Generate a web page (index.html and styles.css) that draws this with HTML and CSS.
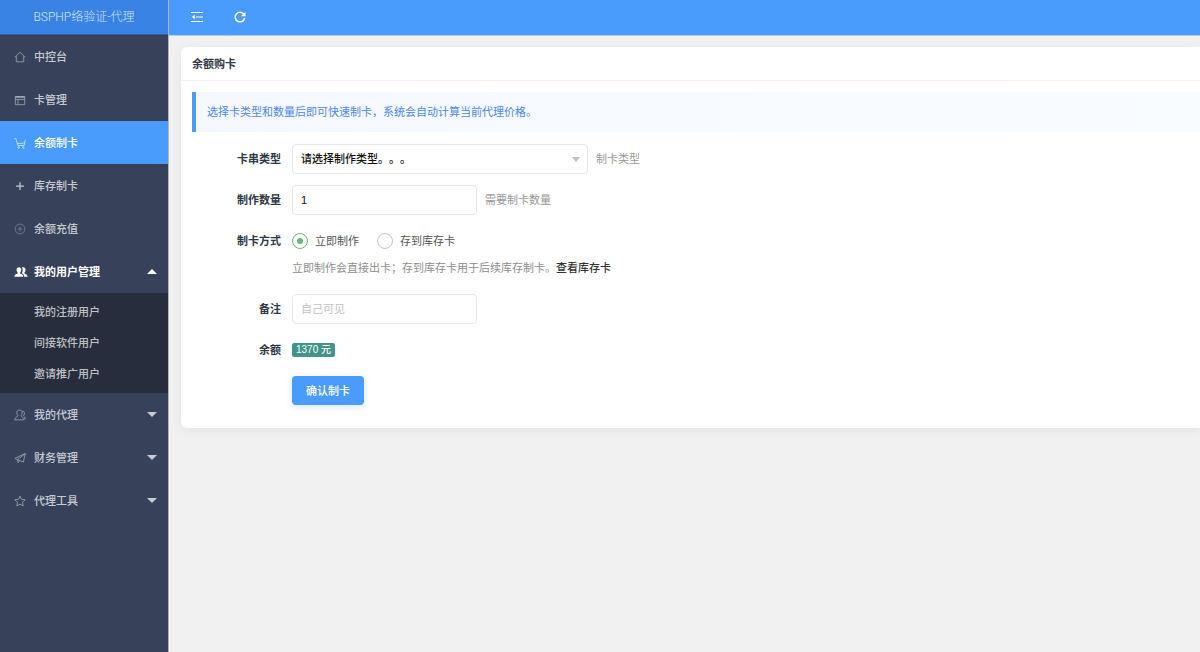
FILE: index.html
```html
<!DOCTYPE html>
<html lang="zh-CN">
<head>
<meta charset="utf-8">
<meta name="viewport" content="width=device-width, initial-scale=1">
<title>BSPHP络验证-代理</title>
<link rel="stylesheet" href="styles.css">
</head>
<body>
<div class="app">
  <aside class="sidebar">
    <h1 class="brand">BSPHP络验证-代理</h1>
    <nav class="nav">
      <a class="nav-item" href="#">
        <svg class="icon" viewBox="0 0 12 12"><path d="M.8 6.300 6 1.300l5.200 5M2.300 5.200v5.600h7.400V5.200"/></svg>
        <span>中控台</span>
      </a>
      <a class="nav-item" href="#">
        <svg class="icon" viewBox="0 0 12 12"><path d="M1.300 2.500h9.400v8.200H1.300zM1.300 5.500h9.400M4 5.500v5.200"/><path d="M1.300 3h9.400" stroke-width="1.600"/></svg>
        <span>卡管理</span>
      </a>
      <a class="nav-item nav-item-active" href="#">
        <svg class="icon" viewBox="0 0 12 12"><path d="M.3 1.500h1.600l2 7h6.300l1-5.800M3.400 6.700 10.700 6"/><circle cx="4.600" cy="10.500" r=".8"/><circle cx="9.300" cy="10.500" r=".8"/></svg>
        <span>余额制卡</span>
      </a>
      <a class="nav-item" href="#">
        <svg class="icon icon-strong" viewBox="0 0 12 12"><path d="M6 2.300v7.800M2.100 6.200h7.800"/></svg>
        <span>库存制卡</span>
      </a>
      <a class="nav-item" href="#">
        <svg class="icon icon-faint" viewBox="0 0 12 12"><circle cx="6" cy="6" r="4.900"/><path d="M6 3.700v4.600M3.700 6h4.600"/></svg>
        <span>余额充值</span>
      </a>
      <a class="nav-item nav-item-open" href="#">
        <svg class="icon icon-solid icon-wide" viewBox="0 0 14 12"><path d="M4.900 1.200c1.500 0 2.300 1.100 2.300 2.600 0 1.200-.5 2.300-1.100 2.900v.8c1.700.6 3 1.100 3.200 3.300H.3c.2-2.200 1.700-2.700 3.400-3.300v-.8C3.100 6.100 2.600 5 2.600 3.800c0-1.500.8-2.600 2.300-2.600z"/><path d="M8 1.500c.4-.2.7-.3 1.200-.3 1.500 0 2.300 1.100 2.300 2.600 0 1.200-.5 2.300-1.100 2.900v.8c1.700.6 3 1.100 3.200 3.300h-3.500c-.1-1.800-.8-2.800-2.300-3.500.6-1 .9-2 .9-3.300 0-1-.2-1.800-.7-2.500z"/></svg>
        <span>我的用户管理</span>
        <svg class="caret" viewBox="0 0 10 5"><path d="M0 5 5 0l5 5z"/></svg>
      </a>
      <div class="subnav">
        <a class="subnav-item" href="#">我的注册用户</a>
        <a class="subnav-item" href="#">间接软件用户</a>
        <a class="subnav-item" href="#">邀请推广用户</a>
      </div>
      <a class="nav-item" href="#">
        <svg class="icon" viewBox="0 0 12 12"><path d="M5.500 1c1.700 0 2.700 1.200 2.700 2.900 0 1.200-.5 2.200-1.200 2.800 0 1 2.300.8 2.400 4.200H.8c.2-3.400 3.300-3.200 3.300-4.200-.8-.6-1.300-1.600-1.300-2.800C2.800 2.200 3.800 1 5.500 1zM8.300 2c1.300.1 2.200 1 2.200 2.500 0 1-.4 1.700-1 2.200.1.800 1.700 1 1.900 3.300H10"/></svg>
        <span>我的代理</span>
        <svg class="caret" viewBox="0 0 10 5"><path d="M0 0h10L5 5z"/></svg>
      </a>
      <a class="nav-item" href="#">
        <svg class="icon" viewBox="0 0 12 12"><path d="M11.300 1.500.8 6.400l2.700 1.300 5.900 2.300zM11.300 1.500 3.500 7.700l.6 3 1.600-2.100"/></svg>
        <span>财务管理</span>
        <svg class="caret" viewBox="0 0 10 5"><path d="M0 0h10L5 5z"/></svg>
      </a>
      <a class="nav-item" href="#">
        <svg class="icon" viewBox="0 0 12 12"><path d="m6 1.100 1.500 3.200 3.700.5-2.700 2.500.7 3.600L6 9.200l-3.200 1.700.7-3.600L.8 4.800l3.700-.5z"/></svg>
        <span>代理工具</span>
        <svg class="caret" viewBox="0 0 10 5"><path d="M0 0h10L5 5z"/></svg>
      </a>
    </nav>
  </aside>

  <div class="content">
    <header class="topbar">
      <button class="tool" type="button" aria-label="收起菜单">
        <svg viewBox="0 0 12 12"><path d="M0 1.500h12M5 6h7M0 10.500h12"/><path class="fill" d="M3.800 3.800v4.400L.8 6z"/></svg>
      </button>
      <button class="tool" type="button" aria-label="刷新">
        <svg viewBox="0 0 12 12"><path d="M9.900 3.200A4.800 4.800 0 1 0 10.700 7" stroke-width="1.500"/><path class="fill" d="M11.500.8v4.500H7z"/></svg>
      </button>
    </header>

    <main class="main">
      <section class="card">
        <h2 class="card-title">余额购卡</h2>
        <div class="card-body">
          <p class="notice">选择卡类型和数量后即可快速制卡，系统会自动计算当前代理价格。</p>
          <form class="form">
            <div class="row">
              <label class="label" for="type">卡串类型</label>
              <div class="select-box">
                <select class="field" id="type"><option>请选择制作类型。。。</option></select>
              </div>
              <span class="hint">制卡类型</span>
            </div>
            <div class="row">
              <label class="label" for="count">制作数量</label>
              <input class="field field-short" id="count" type="text" value="1">
              <span class="hint">需要制卡数量</span>
            </div>
            <div class="row" role="radiogroup" aria-labelledby="mode">
              <span class="label" id="mode">制卡方式</span>
              <div class="radios">
                <label class="radio"><input type="radio" name="mode" checked>立即制作</label>
                <label class="radio"><input type="radio" name="mode">存到库存卡</label>
              </div>
            </div>
            <p class="help">立即制作会直接出卡；存到库存卡用于后续库存制卡。<a class="help-link" href="#">查看库存卡</a></p>
            <div class="row">
              <label class="label" for="note">备注</label>
              <input class="field field-short" id="note" type="text" placeholder="自己可见">
            </div>
            <div class="row">
              <span class="label">余额</span>
              <span class="badge">1370 元</span>
            </div>
            <div class="actions">
              <button class="submit" type="submit">确认制卡</button>
            </div>
          </form>
        </div>
      </section>
    </main>
  </div>
</div>
</body>
</html>
```
FILE: styles.css
```css
* {
  box-sizing: border-box;
}

body {
  margin: 0;
  font: 11px/16px "Liberation Sans", "Noto Sans CJK SC", sans-serif;
  text-spacing-trim: space-all;
  color: #303747;
  background: #f1f1f1;
}

h1, h2, p {
  margin: 0;
}

a {
  text-decoration: none;
}

button, input, select {
  font: inherit;
  text-spacing-trim: inherit;
}

.app {
  display: flex;
  min-height: 100vh;
}

/* Sidebar */

.sidebar {
  flex: none;
  width: 169px;
  background: #374159;
  border-right: 1px solid #aeb4c0;
}

.brand {
  height: 35px;
  font-family: Roboto, "Noto Sans CJK SC", sans-serif;
  font-size: 12px;
  font-weight: 300;
  line-height: 34px;
  text-align: center;
  color: #d3e5fb;
  background: #3883e3;
  border-bottom: 1px solid #345a93;
}

.nav-item {
  display: flex;
  align-items: center;
  height: 43px;
  padding: 0 11px 0 14px;
  font-weight: 500;
  color: #c7cad2;
}

.nav-item span {
  flex: 1;
  margin-left: 8px;
  white-space: nowrap;
}

.nav-item-active {
  color: #fff;
  background: #4a9cfc;
}

.nav-item-open {
  font-weight: 700;
  color: #fff;
}

.icon {
  flex: none;
  width: 12px;
  height: 12px;
  fill: none;
  stroke: currentColor;
  stroke-width: 0.8;
  opacity: 0.75;
}

.icon-strong {
  stroke-width: 1.2;
  opacity: 1;
}

.icon-faint {
  opacity: 0.5;
}

.icon-solid {
  fill: currentColor;
  stroke: none;
  opacity: 1;
}

.icon-wide {
  width: 14px;
}

.nav-item .icon-wide + span {
  margin-left: 6px;
}

.caret {
  flex: none;
  width: 10px;
  height: 5px;
  fill: currentColor;
}

.subnav {
  padding: 4px 0 3px;
  background: #272d3c;
}

.subnav-item {
  display: block;
  padding-left: 34px;
  font-weight: 500;
  line-height: 31px;
  color: #bec0c5;
}

/* Top bar */

.content {
  flex: 1;
  min-width: 0;
}

.topbar {
  display: flex;
  align-items: center;
  gap: 19px;
  height: 36px;
  padding: 0 16px 2px;
  background: #4a9cfc;
  border-bottom: 1px solid #aacdf5;
}

.tool {
  display: grid;
  place-items: center;
  width: 24px;
  height: 24px;
  padding: 0;
  color: #fff;
  background: none;
  border: 0;
}

.tool svg {
  width: 12px;
  height: 12px;
  fill: none;
  stroke: currentColor;
  stroke-width: 1.2;
}

.tool .fill {
  fill: currentColor;
  stroke: none;
}

/* Card */

.main {
  padding: 11px 0 11px 12px;
}

.card {
  background: #fff;
  border-radius: 6px 0 0 6px;
  box-shadow: 0 2px 12px rgba(0, 0, 0, 0.06);
}

.card-title {
  height: 34px;
  padding-left: 11px;
  font-size: 11px;
  line-height: 34px;
  border-bottom: 1px solid #f1f1f4;
}

.card-body {
  padding: 11px 0 23px 11px;
}

.notice {
  padding: 12px 11px;
  color: #4d85f3;
  background: linear-gradient(90deg, #f5f9ff, #f9fcff);
  border-left: 4px solid #4a9cfc;
}

/* Form */

.form {
  padding-top: 12px;
}

.row {
  display: flex;
  align-items: center;
  min-height: 30px;
  margin-bottom: 11px;
}

.label {
  flex: none;
  width: 100px;
  padding-right: 11px;
  font-weight: 700;
  text-align: right;
}

.field {
  width: 100%;
  height: 30px;
  padding: 0 8px;
  color: #111;
  background: #fff;
  border: 1px solid #e5e8f2;
  border-radius: 4px;
  appearance: none;
}

.field::placeholder {
  color: #c2c2c4;
}

select.field {
  font-weight: 500;
}

.field-short {
  width: 185px;
}

.select-box {
  position: relative;
  width: 296px;
}

.select-box::after {
  position: absolute;
  top: 13px;
  right: 8px;
  border: 4px solid transparent;
  border-top: 5px solid #c2c2c2;
  border-bottom: 0;
  pointer-events: none;
  content: "";
}

.hint {
  margin-left: 8px;
  color: #989898;
}

.radios {
  display: flex;
  gap: 18px;
}

.radio {
  display: flex;
  align-items: center;
  gap: 7px;
  color: #555;
}

.radio input {
  display: grid;
  place-items: center;
  width: 16px;
  height: 16px;
  margin: 0;
  border: 1px solid #c4c4c4;
  border-radius: 50%;
  appearance: none;
}

.radio input:checked {
  border-color: #68b873;
}

.radio input:checked::before {
  width: 6px;
  height: 6px;
  background: #68b873;
  border-radius: 50%;
  content: "";
}

.help {
  margin: -7px 0 18px 100px;
  color: #8e8e8e;
}

.help-link {
  font-weight: 500;
  color: #333;
}

.badge {
  padding: 0 4px;
  font-size: 10px;
  font-weight: 500;
  line-height: 14px;
  color: #fff;
  background: #429488;
  border-radius: 2px;
}

.actions {
  display: flex;
  padding-left: 100px;
}

.submit {
  height: 29px;
  padding: 0 14px;
  font-weight: 500;
  color: #fff;
  background: #4a9cfc;
  border: 0;
  border-radius: 4px;
  box-shadow: 0 2px 6px rgba(74, 156, 252, 0.25);
}
```
